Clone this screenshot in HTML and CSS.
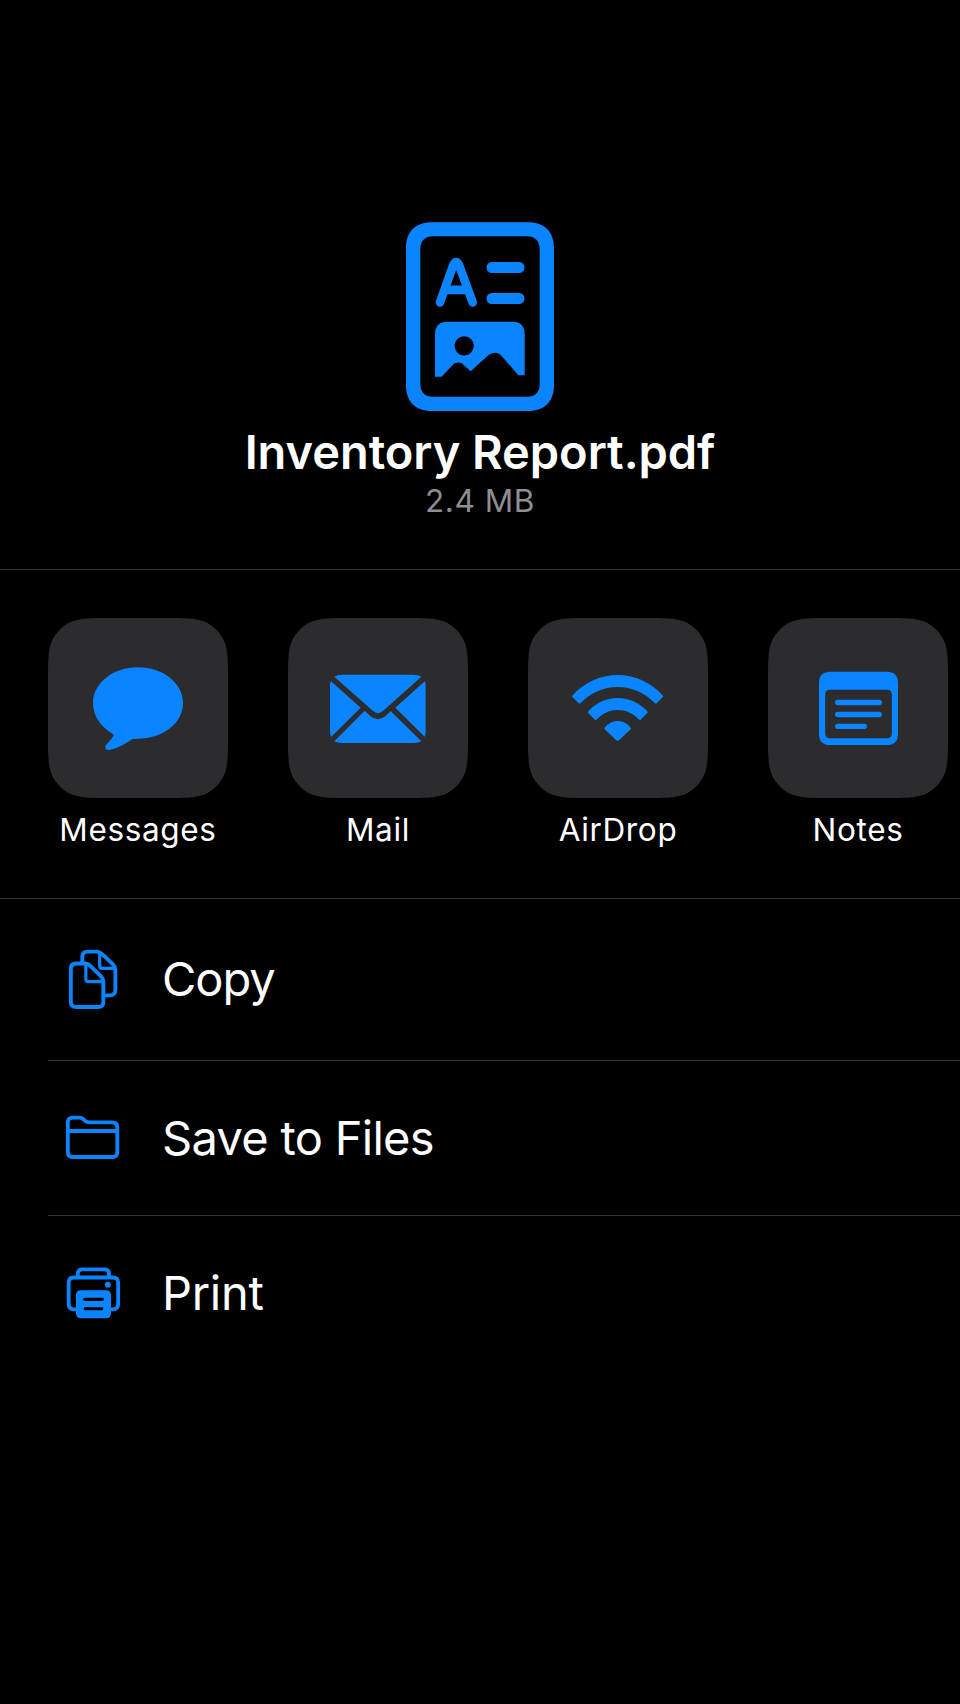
FILE: index.html
```html
<!DOCTYPE html>
<html lang="en">
<head>
<meta charset="utf-8">
<meta name="viewport" content="width=device-width">
<title>Share</title>
<link rel="stylesheet" href="styles.css">
</head>
<body>
<svg class="defs" aria-hidden="true">
  <symbol id="tile" viewBox="0 0 540 540">
    <path d="M183.4 0H356.6C409.4 0 435.8 0 464.2 9C495.3 20.3 519.7 44.7 531 75.8C540 104.2 540 130.6 540 183.4V356.6C540 409.4 540 435.8 531 464.2C519.7 495.3 495.3 519.7 464.2 531C435.8 540 409.4 540 356.6 540H183.4C130.6 540 104.2 540 75.8 531C44.7 519.7 20.3 495.3 9 464.2C0 435.8 0 409.4 0 356.6V183.4C0 130.6 0 104.2 9 75.8C20.3 44.7 44.7 20.3 75.8 9C104.2 0 130.6 0 183.4 0Z"/>
  </symbol>
</svg>
<main class="sheet">
  <header class="file">
    <svg class="file-icon" viewBox="48 36 444 567">
      <path fill-rule="evenodd" d="M126 37H414C464 37 492 65 492 115V525C492 575 464 603 414 603H126C76 603 48 575 48 525V115C48 65 76 37 126 37ZM130 79C104 79 91 93 91 118V521C91 547 104 560 130 560H410C436 560 449 547 449 521V118C449 93 436 79 410 79Z"/>
      <path class="line thick" d="M150 277L190 165Q198.500 148 207 165L248 277M168 239.500H230"/>
      <path class="line bar" d="M306 172.500H387M306 265.500H387"/>
      <path fill-rule="evenodd" d="M173 335H367Q404 335 404 373V496H385L335 438C324 425 308 425 295 436L242 484L221 465C211 456 199 455 188 465L155 500H135V373Q135 335 173 335ZM251.500 407.500A29 29 0 1 0 193.500 407.500A29 29 0 1 0 251.500 407.500Z"/>
    </svg>
    <h1 class="file-name">Inventory Report.pdf</h1>
    <p class="file-size">2.4 MB</p>
  </header>

  <nav class="apps">
    <a class="app">
      <svg class="app-icon" viewBox="24 24 540 540">
        <use class="tile" href="#tile" x="24" y="24" width="540" height="540"/>
        <path d="M294 171.500C369 171.500 429 219 429 279C429 340 369 389 278 387C253 404 226 418 206 420C195 421 193 411 200 403C209 393 218 383 222 374C183 353 159 318 159 279C159 219 219 171.500 294 171.500Z"/>
      </svg>
      <span class="app-name">Messages</span>
    </a>
    <a class="app">
      <svg class="app-icon" viewBox="24 24 540 540">
        <use class="tile" href="#tile" x="24" y="24" width="540" height="540"/>
        <path d="M163 200Q172 194 187 194H400Q415 194 424 200L309 303Q294 316 279 303ZM153 214L242 293L154 380Q150 375 150 365V225Q150 217 153 214ZM434 214Q437 218 437 226V366Q437 376 434 380L346 293ZM254 302L271 318Q294 337 317 318L332 303L424 394Q416 399 402 399H186Q171 399 163 394Z"/>
      </svg>
      <span class="app-name">Mail</span>
    </a>
    <a class="app">
      <svg class="app-icon" viewBox="24 24 540 540">
        <use class="tile" href="#tile" x="24" y="24" width="540" height="540"/>
        <path d="M157 257C191 218 241 195 293 195C345 195 395 218 429 257Q431 259 429 261L410 280Q407 282 404 279C375 249 336 231 293 231C250 231 211 249 182 279Q179 282 176 280L157 261Q155 259 157 257ZM205 304C227 279 258 264 293 264C328 264 359 279 382 304Q384 307 382 309L362 329Q359 331 356 328C340 310 317 300 293 300C269 300 248 310 231 328Q228 331 225 329L205 310Q202 307 205 304ZM254 353C264 340 278 333 293 333C308 333 322 340 332 353Q334 356 332 358L297 391Q293 395 289 391L254 358Q252 356 254 353Z"/>
      </svg>
      <span class="app-name">AirDrop</span>
    </a>
    <a class="app">
      <svg class="app-icon" viewBox="24 24 540 540">
        <use class="tile" href="#tile" x="24" y="24" width="540" height="540"/>
        <path fill-rule="evenodd" d="M211 185.500H380Q414 185.500 414 219V371Q414 405 380 405H211Q177 405 177 371V219Q177 185.500 211 185.500ZM210 239.500Q195.500 239.500 195.500 254V370Q195.500 385 210 385H381Q395.500 385 395.500 370V254Q395.500 239.500 381 239.500Z"/>
        <path class="line rule" d="M233 277.500H358M233 313.500H358M233 349H313"/>
      </svg>
      <span class="app-name">Notes</span>
    </a>
  </nav>

  <ul class="actions">
    <li class="action">
      <svg class="action-icon" viewBox="72 177 180 180">
        <path class="line" d="M127 216V201Q127 185 143 185H171Q179 185 185 191L219 223Q226 230 226 239V299Q226 316 210 316H195"/>
        <path class="line" d="M109 220.500H136Q144 220.500 150 227L184 260Q190 266 190 275V336Q190 351 174 351H109Q92.500 351 92.500 336V237Q92.500 220.500 109 220.500Z"/>
        <path class="line thin" d="M179 188V227Q179 235 187 235H223M137.500 224V267Q137.500 275 145 275H189"/>
      </svg>
      <span class="action-name copy">Copy</span>
    </li>
    <li class="action">
      <svg class="action-icon" viewBox="72 54 180 180">
        <path class="line" d="M83.500 98Q83.500 83 98 83H118Q124 83 129 87L135 92Q141 97 149 97H217Q232 97 232 112V186Q232 201 217 201H98Q83.500 201 83.500 186Z"/>
        <path class="line" d="M85 123H231"/>
      </svg>
      <span class="action-name save">Save to Files</span>
    </li>
    <li class="action">
      <svg class="action-icon" viewBox="72 68 180 180">
        <path class="line" d="M113.500 109V101Q113.500 87 127 87H193Q207 87 207 101V109M112 207H102Q86 207 86 191V127Q86 111.500 102 111.500H218Q234.500 111.500 234.500 127V191Q234.500 207 218 207H209"/>
        <circle cx="203.500" cy="133" r="9"/>
        <path fill-rule="evenodd" d="M123 149.500H198Q213 149.500 213 164V219Q213 234 198 234H123Q108 234 108 219V164Q108 149.500 123 149.500ZM134 172A5 5 0 0 0 134 182H187A5 5 0 0 0 187 172ZM134 201A5 5 0 0 0 134 210H187A5 5 0 0 0 187 201Z"/>
      </svg>
      <span class="action-name print">Print</span>
    </li>
  </ul>
</main>
</body>
</html>
```
FILE: styles.css
```css
* { box-sizing: border-box; }

body {
  margin: 0;
  background: #000;
  color: #fff;
  font-family: Inter, "Liberation Sans", sans-serif;
}

svg { display: block; fill: #0a84ff; }
.defs { width: 0; height: 0; position: absolute; }

.line {
  fill: none;
  stroke: #0a84ff;
  stroke-width: 11.500;
  stroke-linecap: butt;
  stroke-linejoin: round;
}
.line.thin { stroke-width: 9.500; }
.line.thick { stroke-width: 26; stroke-linecap: round; }
.line.bar { stroke-width: 33; stroke-linecap: round; }
.line.rule { stroke-width: 16; stroke-linecap: round; }

.sheet { min-height: 1704px; }

.file {
  height: 570px;
  padding-top: 222px;
  border-bottom: 1px solid #333335;
  display: flex;
  flex-direction: column;
  align-items: center;
}
.file-icon { width: 148px; height: 189px; }
.file-name {
  margin: 12px 0 0;
  font-size: 47px;
  line-height: 58px;
  font-weight: 600;
  letter-spacing: -0.050px;
  white-space: nowrap;
}
.file-size {
  margin: 0;
  font-size: 31.500px;
  line-height: 40px;
  letter-spacing: 0.550px;
  color: #8e8e93;
}

.apps {
  height: 329px;
  padding: 48px 0 0 48px;
  border-bottom: 1px solid #333335;
  display: flex;
  gap: 60px;
}
.app {
  flex: none;
  width: 180px;
  display: flex;
  flex-direction: column;
  align-items: center;
}
.app-icon { width: 180px; height: 180px; }
.tile { fill: #2c2c2e; }
.app-name {
  margin-top: 12px;
  font-size: 31.500px;
  line-height: 40px;
  letter-spacing: 0.650px;
}

.actions { margin: 0; padding: 0 0 0 48px; list-style: none; }
.action {
  height: 155px;
  padding-left: 16px;
  display: flex;
  align-items: center;
  gap: 38px;
  border-bottom: 1px solid #333335;
}
.action:first-child { height: 162px; padding-bottom: 1px; }
.action:last-child { border-bottom-color: transparent; }
.action-icon { width: 60px; height: 60px; }
.action-name { font-size: 47px; line-height: 58px; }
.copy { letter-spacing: -1px; }
.save { letter-spacing: -0.700px; }
.print { letter-spacing: -0.300px; }
```
